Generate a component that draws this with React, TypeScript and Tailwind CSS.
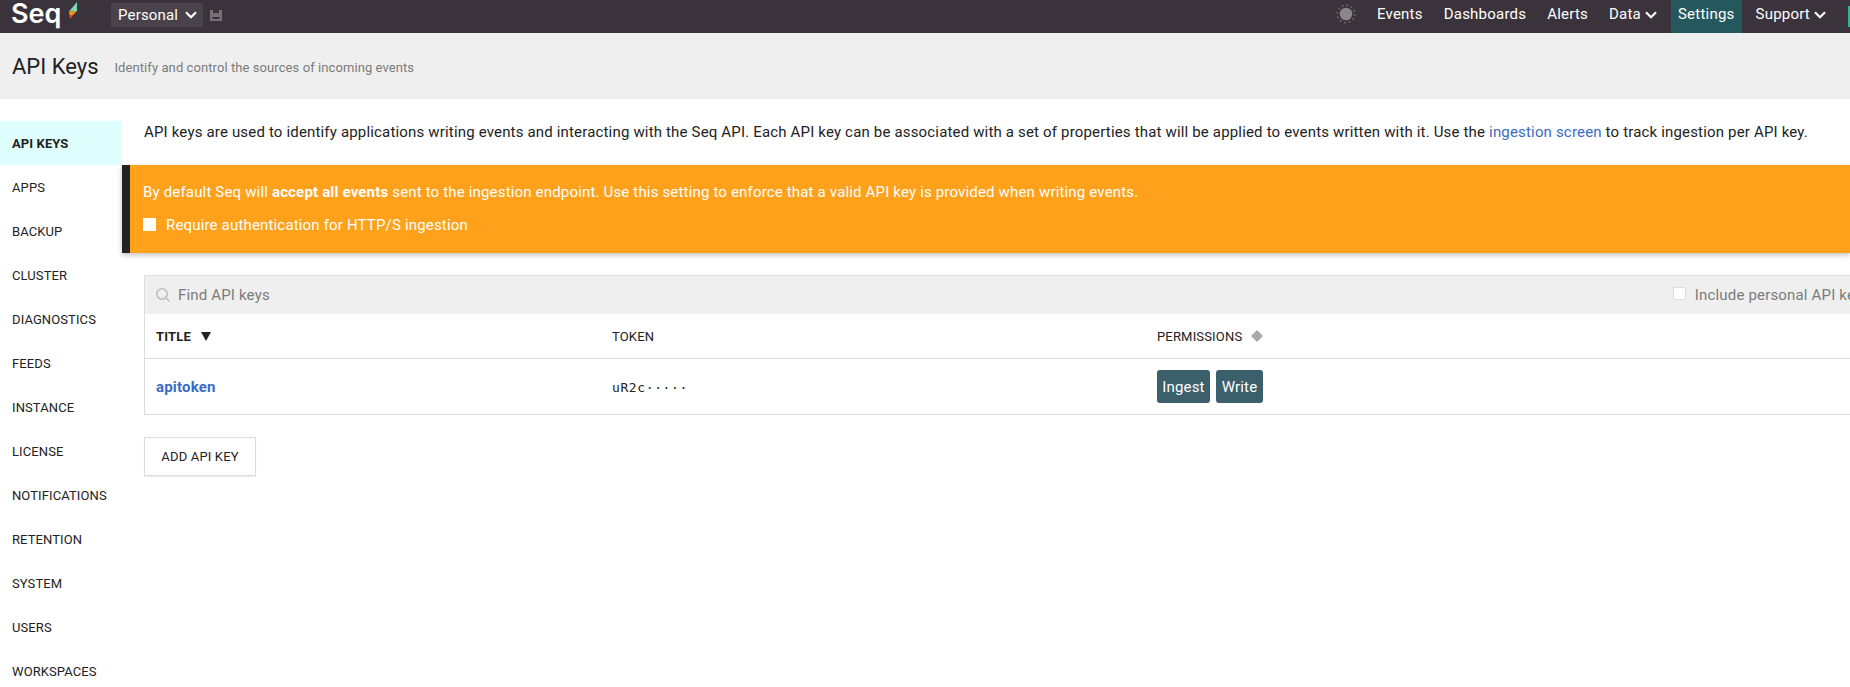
const sections = [
  "API KEYS",
  "APPS",
  "BACKUP",
  "CLUSTER",
  "DIAGNOSTICS",
  "FEEDS",
  "INSTANCE",
  "LICENSE",
  "NOTIFICATIONS",
  "RETENTION",
  "SYSTEM",
  "USERS",
  "WORKSPACES",
];

function SeqMark() {
  return (
    <svg width="8" height="17" viewBox="0 0 8 17" className="ml-[8px] mt-[2px]">
      <polygon points="8,0 8,9 0,9.5" fill="#7fd6b4" />
      <polygon points="0,9.5 8,9 4,13 0.6,13" fill="#f7931e" />
      <polygon points="0.6,13 4,13 1,17" fill="#e8501f" />
    </svg>
  );
}

function SunIcon() {
  return (
    <svg width="20" height="20" viewBox="0 0 20 20">
      <circle cx="10" cy="10" r="6.3" fill="#8a868a" />
      <circle cx="10" cy="10" r="8.8" fill="none" stroke="#6f6a6f" strokeWidth="1.4" strokeDasharray="2 2.6" />
    </svg>
  );
}

function DriveIcon() {
  return (
    <svg width="12" height="11" viewBox="0 0 12 11">
      <path d="M0 0h3v3h6V0h3v11H0z M2.5 7h7v2h-7z" fill="#777177" fillRule="evenodd" />
    </svg>
  );
}

function Chevron() {
  return (
    <svg width="12" height="8" viewBox="0 0 12 8" fill="none" stroke="white" strokeWidth="2.2">
      <path d="M1 1.2l5 5 5-5" />
    </svg>
  );
}

function NavLink({ label, active, menu }: { label: string; active?: boolean; menu?: boolean }) {
  return (
    <div className={`flex h-[33px] items-center gap-[4px] px-[7px] pb-[4px] ${active ? "bg-[#25585c]" : ""}`}>
      <span>{label}</span>
      {menu && <Chevron />}
    </div>
  );
}

export default function App() {
  return (
    <div className="h-[687px] w-full overflow-hidden bg-white font-['Roboto',sans-serif] text-[15px] tracking-[0.17px] text-[#222]">
      <header className="flex h-[33px] items-center bg-[#3b333b] text-white">
        <div className="ml-[11px] flex h-[33px] w-[100px] items-start">
          <span className="font-['Inter',sans-serif] text-[27px] leading-none font-semibold tracking-normal">Seq</span>
          <SeqMark />
        </div>
        <div className="mb-[3px] flex h-[24px] w-[92px] items-center gap-[7px] bg-[#4a424a] pl-[7px]">
          Personal
          <Chevron />
        </div>
        <div className="mb-[3px] ml-[7px]">
          <DriveIcon />
        </div>
        <div className="mb-[5px] ml-auto mr-[14px]">
          <SunIcon />
        </div>
        <nav className="mr-[15px] flex items-center gap-[7px] tracking-[0.22px]">
          <NavLink label="Events" />
          <NavLink label="Dashboards" />
          <NavLink label="Alerts" />
          <NavLink label="Data" menu />
          <NavLink label="Settings" active />
          <NavLink label="Support" menu />
        </nav>
        <div className="h-[21px] w-[2px] bg-[#2fb592]" />
      </header>

      <div className="flex h-[66px] items-center gap-[16px] bg-[#efefef] pl-[12px]">
        <h1 className="text-[22px] font-normal tracking-normal">API Keys</h1>
        <p className="mt-[4px] text-[13px] tracking-[0.08px] text-[#7b7b7b]">
          Identify and control the sources of incoming events
        </p>
      </div>

      <div className="flex pt-[22px]">
        <aside className="w-[122px] shrink-0 text-[13px] tracking-[0.1px]">
          {sections.map((name, i) => (
            <div
              key={name}
              className={`flex h-[44px] items-center pl-[12px] pt-[1px] ${i === 0 ? "bg-[#dfffff] font-bold" : ""}`}
            >
              {name}
            </div>
          ))}
        </aside>

        <main className="min-w-0 flex-1">
          <p className="flex h-[44px] pl-[22px] leading-[22px] whitespace-nowrap">
            <span>
              API keys are used to identify applications writing events and interacting with the Seq API. Each API key can
              be associated with a set of properties that will be applied to events written with it. Use the{" "}
              <a className="text-[#3a6cc4]">ingestion screen</a> to track ingestion per API key.
            </span>
          </p>

          <section className="h-[88px] border-l-[8px] border-[#222] bg-[#ffa11b] pl-[13px] pt-[16px] text-white shadow-[0_2px_5px_rgba(0,0,0,0.25)]">
            <p className="leading-[22px]">
              By default Seq will <b>accept all events</b> sent to the ingestion endpoint. Use this setting to enforce that
              a valid API key is provided when writing events.
            </p>
            <label className="mt-[11px] flex items-center gap-[10px] leading-[22px]">
              <span className="mt-[-2px] h-[13px] w-[13px] bg-white" />
              Require authentication for HTTP/S ingestion
            </label>
          </section>

          <div className="ml-[22px] mt-[22px] w-[1800px] border border-[#ddd]">
            <div className="flex h-[38px] items-center bg-[#efefef] pl-[10px] text-[#7b7b7b]">
              <svg width="16" height="16" viewBox="0 0 16 16" fill="none" stroke="#bdbdbd">
                <circle cx="7" cy="7" r="5.2" strokeWidth="1.6" />
                <path d="M11 11l3.5 3.5" strokeWidth="1.4" />
              </svg>
              <span className="ml-[7px]">Find API keys</span>
              <span className="ml-[1403px] mt-[-3px] h-[13px] w-[13px] rounded-[1px] border border-[#ddd] bg-white" />
              <span className="ml-[9px] whitespace-nowrap">Include personal API keys</span>
            </div>
            <div className="grid h-[45px] grid-cols-[456px_545px_1fr] items-center border-b border-[#ddd] pl-[11px] pt-[2px] text-[13px]">
              <div className="flex items-center gap-[10px] font-bold">
                TITLE
                <svg width="10" height="9" viewBox="0 0 10 9" className="mt-[-2px]">
                  <polygon points="0,0 10,0 5,9" fill="#222" />
                </svg>
              </div>
              <div>TOKEN</div>
              <div className="flex items-center gap-[9px]">
                PERMISSIONS
                <svg width="12" height="12" viewBox="0 0 12 12" className="mt-[-2px]">
                  <polygon points="6,0 12,6 6,12 0,6" fill="#a8a8a8" />
                </svg>
              </div>
            </div>
            <div className="grid h-[55px] grid-cols-[456px_545px_1fr] items-center pl-[11px]">
              <a className="pt-[2px] font-bold text-[#3a6cc4]">apitoken</a>
              <span className="pt-[2px] font-['DejaVu_Sans_Mono',monospace] text-[13px] tracking-[0.6px]">uR2c·····</span>
              <div className="flex gap-[6px]">
                <span className="flex h-[33px] w-[53px] items-center justify-center rounded-[3px] bg-[#3b5f6b] pt-[1px] text-white">
                  Ingest
                </span>
                <span className="flex h-[33px] w-[47px] items-center justify-center rounded-[3px] bg-[#3b5f6b] pt-[1px] text-white">
                  Write
                </span>
              </div>
            </div>
          </div>

          <button className="ml-[22px] mt-[22px] h-[39px] w-[112px] border border-[#ddd] text-[13px] shadow-[0_1px_1px_rgba(0,0,0,0.08)]">
            ADD API KEY
          </button>
        </main>
      </div>
    </div>
  );
}
